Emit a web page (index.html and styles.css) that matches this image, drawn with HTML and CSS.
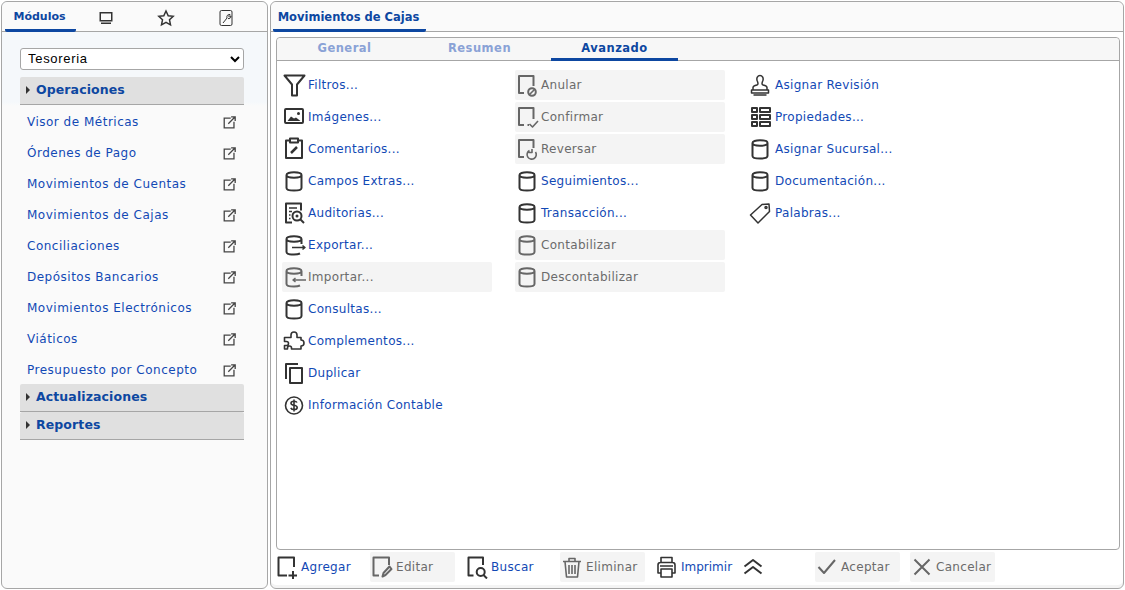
FILE: index.html
```html
<!DOCTYPE html>
<html lang="es">
<head>
    <meta charset="UTF-8">
    <title>Movimientos de Cajas</title>
    <link rel="stylesheet" href="styles.css">
</head>
<body>
    <svg class="icon-defs" width="0" height="0">
        <defs>
            <g id="i-db"><path d="M3.500 6c0-1.700 3-2.700 7.500-2.700s7.500 1 7.500 2.700v13c0 1.500-3 2.500-7.500 2.500s-7.500-1-7.500-2.500zM3.500 6c0 1.700 3 2.700 7.500 2.700s7.500-1 7.500-2.700"/></g>
            <g id="i-filter"><path d="M1.500 2.500h20L14 11.500v11H9v-11z"/></g>
            <g id="i-image"><rect x="2" y="4" width="18" height="14" rx="1"/><path class="fill" d="M4.500 16l3.500-4.500 3 2 2-1 4.500 3.500z"/><circle class="fill" cx="15.500" cy="8.500" r="1.500"/></g>
            <g id="i-clip"><path d="M7 3.500H3V21h16V3.500h-4M7 1.500h8v4H7z"/><path d="M8 16l6-6" stroke-width="2.500"/></g>
            <g id="i-audit"><path d="M9 21.500H3v-19h15v7"/><path d="M6 7h8M6 10.500h3M6 14h1.500M6 17.500h1.500" stroke-width="1.500"/><circle cx="14" cy="15" r="4.500"/><circle class="fill" cx="14" cy="15" r="1.500"/><path d="M17.500 18.500l3.500 3.500"/></g>
            <g id="i-export"><path d="M18.500 11V6c0-1.700-3-2.700-7.500-2.700S3.500 4.300 3.500 6v13c0 1.500 3 2.500 7.500 2.500 2.500 0 4.500-.3 6-1M3.500 6c0 1.700 3 2.700 7.500 2.700s7.500-1 7.500-2.700"/><path d="M9 14.500h13M19.500 12.500l2.500 2-2.500 2" stroke-width="1.500"/></g>
            <g id="i-import"><path d="M18.500 11V6c0-1.700-3-2.700-7.500-2.700S3.500 4.300 3.500 6v13c0 1.500 3 2.500 7.500 2.500 2.500 0 4.500-.3 6-1M3.500 6c0 1.700 3 2.700 7.500 2.700s7.500-1 7.500-2.700"/><path d="M10 15h13M12.500 13l-2.500 2 2.500 2" stroke-width="1.500"/></g>
            <g id="i-puzzle" stroke-width="1.600"><path d="M1.500 20v-3.500h2a2 2 0 0 0 0-4h-2V8.500H8V6a3 3 0 0 1 6 0v2.500h4V11a3 3 0 0 1 0 6v3H8.500v-1a2 2 0 0 0-4 0v1z"/></g>
            <g id="i-copy"><path d="M3 18V3h12M7 7h12v15H7z"/></g>
            <g id="i-dollar" stroke-width="1.600"><circle cx="11" cy="12.500" r="8.500"/><path d="M14 9.500c-.5-1-1.500-1.300-3-1.300-1.800 0-3 .8-3 2 0 2.800 6.200 1.400 6.200 4.200 0 1.300-1.300 2.100-3.200 2.100-1.500 0-2.700-.6-3.200-1.700M11 6.500v12"/></g>
            <g id="i-cancel"><path d="M8 20H3V3h14.500v10"/><circle cx="16" cy="19" r="3.800"/><path d="M13.500 21.500l5-5" stroke-width="1.600"/></g>
            <g id="i-confirm"><path d="M8 20H3V3h14.500v11M11.500 20H13"/><path d="M13.500 19l3 3 5.500-6" stroke-width="1.600"/></g>
            <g id="i-reverse"><path d="M8 20H3V3h14.500v8"/><path d="M13.500 13.500a4.600 4.600 0 1 0 6 1.500M16 12v3.500h-3.500" stroke-width="1.600"/></g>
            <g id="i-stamp" stroke-width="1.500"><path d="M4 17v-2.500c0-1.500 1.500-2 4-2.500 1.500-.3 1-2.500.3-4C7 5 8.800 2.500 11 2.500S15 5 13.700 8c-.7 1.500-1.200 3.700.3 4 2.500.5 4 1 4 2.500V17zM2.500 17h17v3h-17zM4.500 22h13"/></g>
            <g id="i-grid"><rect x="3" y="3" width="5" height="4"/><rect x="11" y="3" width="10" height="4"/><rect x="3" y="10" width="5" height="4"/><rect x="11" y="10" width="10" height="4"/><rect x="3" y="17" width="5" height="4"/><rect x="11" y="17" width="10" height="4"/></g>
            <g id="i-tag" stroke-width="1.500"><path d="M1.500 14L13 3.500l7-.5.5 7.500L9 22z"/><circle cx="17" cy="6.500" r="1"/></g>
            <g id="i-add"><path d="M11 20.500H2.500v-18H18V12"/><path d="M17 16v9M12.500 20.500H21"/></g>
            <g id="i-edit"><path d="M8 20.500H2.500v-18H18V10"/><path d="M11.500 21.500l1-3.500 6-6.500 2 2.500-6 6z"/></g>
            <g id="i-search"><path d="M7.500 20.500h-5v-18H17V10"/><circle cx="14.700" cy="17" r="4"/><path d="M17.500 20l3.500 3.500"/></g>
            <g id="i-trash" stroke-width="1.600"><path d="M2 6.500h18M8 6.500V3.500h6v3M4 6.500l1.500 15.500h11L18 6.500M8 10v9M11 10v9M14 10v9"/></g>
            <g id="i-print" stroke-width="1.600"><path d="M5 8V2.500h11V8M5 18H2V10c0-1.500 1-2.500 2.500-2.500h12c1.500 0 2.500 1 2.500 2.500v8h-3M5 14h11v8H5zM4 11h13"/></g>
            <g id="i-up"><path d="M1.500 11.500L10 5l8.500 6.500M1.500 18.500L10 12l8.500 6.500"/></g>
            <g id="i-check"><path d="M2.500 12l5.500 6L19 5"/></g>
            <g id="i-close"><path d="M3.500 4.500l15 15M18.500 4.500l-15 15"/></g>
            <g id="i-ext"><path d="M9.500 2.500h-8v12h12V7M6.500 9.500L15 1M10 1h5v5"/></g>
        </defs>
    </svg>

    <div class="panel side-panel">
        <div class="tab-bar">
            <div class="tab active">Módulos</div>
            <div class="tab tab-icon">
                <svg width="16" height="16" viewBox="0 0 16 16"><path class="solid" d="M1.500 2h13v9.500h-13zM3 12.500h10v1.500H3z"/><path class="hole" d="M3 3.500h10V10H3z"/></svg>
            </div>
            <div class="tab tab-icon">
                <svg width="18" height="18" viewBox="0 0 18 18"><path class="line" d="M9 2l2.200 4.700 5 .6-3.700 3.500 1 5.100L9 13.400l-4.500 2.500 1-5.100L1.800 7.300l5-.6z"/></svg>
            </div>
            <div class="tab tab-icon">
                <svg width="16" height="18" viewBox="0 0 16 18"><rect class="line thin" x="2" y="1.500" width="12" height="15" rx="1.500"/><path class="line thin" d="M5 14l4-5c-.7-2 .8-4 3-3.500L10.500 7l1 1L13 6.800c.3 2-1.500 3.300-3 2.700"/></svg>
            </div>
        </div>
        <div class="side-body">
            <select class="module-select">
                <option>Tesoreria</option>
            </select>
            <div class="group-head"><span class="arrow"></span>Operaciones</div>
            <ul class="module-list">
                <li>Visor de Métricas<svg class="ext" viewBox="0 0 16 16"><use href="#i-ext"/></svg></li>
                <li>Órdenes de Pago<svg class="ext" viewBox="0 0 16 16"><use href="#i-ext"/></svg></li>
                <li>Movimientos de Cuentas<svg class="ext" viewBox="0 0 16 16"><use href="#i-ext"/></svg></li>
                <li>Movimientos de Cajas<svg class="ext" viewBox="0 0 16 16"><use href="#i-ext"/></svg></li>
                <li>Conciliaciones<svg class="ext" viewBox="0 0 16 16"><use href="#i-ext"/></svg></li>
                <li>Depósitos Bancarios<svg class="ext" viewBox="0 0 16 16"><use href="#i-ext"/></svg></li>
                <li>Movimientos Electrónicos<svg class="ext" viewBox="0 0 16 16"><use href="#i-ext"/></svg></li>
                <li>Viáticos<svg class="ext" viewBox="0 0 16 16"><use href="#i-ext"/></svg></li>
                <li>Presupuesto por Concepto<svg class="ext" viewBox="0 0 16 16"><use href="#i-ext"/></svg></li>
            </ul>
            <div class="group-head"><span class="arrow"></span>Actualizaciones</div>
            <div class="group-head next"><span class="arrow"></span>Reportes</div>
        </div>
    </div>

    <div class="panel main-panel">
        <div class="tab-bar">
            <div class="tab active main-tab">Movimientos de Cajas</div>
        </div>
        <div class="inner-panel">
            <div class="sub-tabs">
                <div class="sub-tab">General</div>
                <div class="sub-tab">Resumen</div>
                <div class="sub-tab current">Avanzado</div>
            </div>
            <div class="actions">
                <div class="action-col">
                    <div class="action"><svg class="ico" viewBox="0 0 24 24"><use href="#i-filter"/></svg>Filtros...</div>
                    <div class="action"><svg class="ico" viewBox="0 0 24 24"><use href="#i-image"/></svg>Imágenes...</div>
                    <div class="action"><svg class="ico" viewBox="0 0 24 24"><use href="#i-clip"/></svg>Comentarios...</div>
                    <div class="action"><svg class="ico" viewBox="0 0 24 24"><use href="#i-db"/></svg>Campos Extras...</div>
                    <div class="action"><svg class="ico" viewBox="0 0 24 24"><use href="#i-audit"/></svg>Auditorias...</div>
                    <div class="action"><svg class="ico" viewBox="0 0 24 24"><use href="#i-export"/></svg>Exportar...</div>
                    <div class="action off"><svg class="ico" viewBox="0 0 24 24"><use href="#i-import"/></svg>Importar...</div>
                    <div class="action"><svg class="ico" viewBox="0 0 24 24"><use href="#i-db"/></svg>Consultas...</div>
                    <div class="action"><svg class="ico" viewBox="0 0 24 24"><use href="#i-puzzle"/></svg>Complementos...</div>
                    <div class="action"><svg class="ico" viewBox="0 0 24 24"><use href="#i-copy"/></svg>Duplicar</div>
                    <div class="action"><svg class="ico" viewBox="0 0 24 24"><use href="#i-dollar"/></svg>Información Contable</div>
                </div>
                <div class="action-col">
                    <div class="action off"><svg class="ico" viewBox="0 0 24 24"><use href="#i-cancel"/></svg>Anular</div>
                    <div class="action off"><svg class="ico" viewBox="0 0 24 24"><use href="#i-confirm"/></svg>Confirmar</div>
                    <div class="action off"><svg class="ico" viewBox="0 0 24 24"><use href="#i-reverse"/></svg>Reversar</div>
                    <div class="action"><svg class="ico" viewBox="0 0 24 24"><use href="#i-db"/></svg>Seguimientos...</div>
                    <div class="action"><svg class="ico" viewBox="0 0 24 24"><use href="#i-db"/></svg>Transacción...</div>
                    <div class="action off"><svg class="ico" viewBox="0 0 24 24"><use href="#i-db"/></svg>Contabilizar</div>
                    <div class="action off"><svg class="ico" viewBox="0 0 24 24"><use href="#i-db"/></svg>Descontabilizar</div>
                </div>
                <div class="action-col last-col">
                    <div class="action"><svg class="ico" viewBox="0 0 24 24"><use href="#i-stamp"/></svg>Asignar Revisión</div>
                    <div class="action"><svg class="ico" viewBox="0 0 24 24"><use href="#i-grid"/></svg>Propiedades...</div>
                    <div class="action"><svg class="ico" viewBox="0 0 24 24"><use href="#i-db"/></svg>Asignar Sucursal...</div>
                    <div class="action"><svg class="ico" viewBox="0 0 24 24"><use href="#i-db"/></svg>Documentación...</div>
                    <div class="action"><svg class="ico" viewBox="0 0 24 24"><use href="#i-tag"/></svg>Palabras...</div>
                </div>
            </div>
        </div>
        <div class="toolbar">
            <div class="tool"><svg class="ico" viewBox="0 0 24 24"><use href="#i-add"/></svg>Agregar</div>
            <div class="tool off"><svg class="ico" viewBox="0 0 24 24"><use href="#i-edit"/></svg>Editar</div>
            <div class="tool"><svg class="ico" viewBox="0 0 24 24"><use href="#i-search"/></svg>Buscar</div>
            <div class="tool off"><svg class="ico" viewBox="0 0 24 24"><use href="#i-trash"/></svg>Eliminar</div>
            <div class="tool print"><svg class="ico" viewBox="0 0 24 24"><use href="#i-print"/></svg>Imprimir</div>
            <svg class="ico" viewBox="0 0 24 24"><use href="#i-up"/></svg>
            <div class="tool off accept"><svg class="ico" viewBox="0 0 24 24"><use href="#i-check"/></svg>Aceptar</div>
            <div class="tool off"><svg class="ico" viewBox="0 0 24 24"><use href="#i-close"/></svg>Cancelar</div>
        </div>
    </div>
</body>
</html>
```

FILE: styles.css
```css
* {
    box-sizing: border-box;
}

body {
    margin: 0;
    padding: 1px 0 1px 1px;
    display: flex;
    gap: 2px;
    height: 590px;
    overflow: hidden;
    background-color: #fff;
    font-family: 'DejaVu Sans', sans-serif;
    font-size: 12px;
    color: #1249b5;
}

.icon-defs {
    position: absolute;
}

.panel {
    border: 1px solid #a6a6a6;
    border-radius: 6px;
    height: 588px;
}

.side-panel {
    width: 267px;
    flex-shrink: 0;
    background: linear-gradient(#f5f8fb, #f5f8fb 100px, #fafafa 104px);
}

.main-panel {
    width: 854px;
    flex-shrink: 0;
    display: flex;
    flex-direction: column;
    padding: 0 3px 0 5px;
    background-color: #fff;
    box-shadow: inset 0 -3px 0 #f4f4f4;
}

.tab-bar {
    display: flex;
    height: 30px;
    border-bottom: 1px solid #a6a6a6;
    background-color: #fafafa;
    border-radius: 6px 6px 0 0;
    color: #0d47a1;
}

.side-panel .tab-bar {
    padding-left: 3px;
}

.main-panel .tab-bar {
    margin: 0 -3px 0 -5px;
    padding-left: 2px;
}

.tab {
    display: flex;
    align-items: center;
    justify-content: center;
    width: 60px;
    padding-top: 2px;
    font-size: 11px;
    font-weight: bold;
}

.tab.active {
    height: 30px;
    width: 71px;
    padding-right: 2px;
    border-bottom: 3px solid #0d47a1;
    border-radius: 0 0 2px 2px;
}

.tab.main-tab {
    width: 153px;
    font-size: 11.5px;
}

.solid {
    fill: #333;
    fill-rule: evenodd;
}

.hole {
    fill: #fafafa;
}

.line {
    fill: none;
    stroke: #333;
    stroke-width: 1.5;
}

.line.thin {
    stroke-width: 1;
}

.side-body {
    padding: 16px 23px 0 18px;
}

.module-select {
    display: block;
    width: 224px;
    height: 22px;
    padding: 0 3px 1px;
    background-color: #fff;
    border: 1px solid #a6a6a6;
    border-radius: 3px;
    font-family: 'Liberation Sans', sans-serif;
    font-size: 13px;
    letter-spacing: 0.7px;
    color: #000;
}

.group-head {
    display: flex;
    align-items: center;
    height: 28px;
    margin-top: 7px;
    padding-bottom: 2px;
    background-color: #e0e0e0;
    border-bottom: 1px solid #a6a6a6;
    border-radius: 2px 2px 0 0;
    font-weight: bold;
    font-size: 12.5px;
    letter-spacing: 0.1px;
    color: #0d47a1;
}

.module-list + .group-head,
.group-head.next {
    margin-top: 0;
}

.arrow {
    width: 0;
    height: 0;
    margin: 0 6px;
    border-left: 4px solid #333;
    border-top: 4px solid transparent;
    border-bottom: 4px solid transparent;
}

.module-list {
    list-style: none;
    margin: 0;
    padding: 0;
}

.module-list li {
    display: flex;
    align-items: center;
    justify-content: space-between;
    height: 31px;
    padding: 3px 8px 0 7px;
    letter-spacing: 0.5px;
}

.ext {
    width: 13px;
    height: 13px;
    fill: none;
    stroke: #444;
    stroke-width: 1.6;
}

.inner-panel {
    flex: 1;
    margin-top: 5px;
    border: 1px solid #a6a6a6;
    border-radius: 4px;
    background-color: #fff;
    min-height: 0;
}

.sub-tabs {
    display: flex;
    gap: 8px;
    height: 23px;
    padding-left: 4px;
    background-color: #f7f7f7;
    border-bottom: 1px solid #a6a6a6;
    border-radius: 4px 4px 0 0;
}

.sub-tab {
    width: 127px;
    height: 23px;
    text-align: center;
    line-height: 20px;
    font-weight: bold;
    font-size: 11.5px;
    letter-spacing: 0.5px;
    color: #8aa2d6;
}

.sub-tab.current {
    color: #0d47a1;
    border-bottom: 3px solid #0d47a1;
}

.actions {
    display: flex;
    gap: 23px;
    padding: 9px 5px 0;
}

.action-col {
    display: flex;
    flex-direction: column;
    gap: 2px;
    width: 210px;
}

.action {
    display: flex;
    align-items: center;
    gap: 1px;
    height: 30px;
    border-radius: 2px;
    padding-left: 1px;
    letter-spacing: 0.3px;
}

.last-col .action {
    gap: 2px;
}

.off {
    background-color: #f4f4f4;
    color: #6b6b6b;
}

.ico {
    flex-shrink: 0;
    width: 24px;
    height: 24px;
    fill: none;
    stroke: #333;
    stroke-width: 2;
    stroke-linejoin: round;
}

.fill {
    fill: #333;
    stroke: none;
}

.off .ico {
    stroke: #666;
}

.off .fill {
    fill: #666;
}

.toolbar {
    display: flex;
    align-items: center;
    gap: 10px;
    height: 30px;
    margin: 2px 0 6px -1px;
}

.tool {
    display: flex;
    align-items: center;
    gap: 1px;
    width: 85px;
    height: 30px;
    padding-left: 1px;
    border-radius: 2px;
    letter-spacing: 0.3px;
}

.tool.print {
    width: 78px;
    letter-spacing: 0;
}

.tool.accept {
    margin-left: 38px;
}
```
